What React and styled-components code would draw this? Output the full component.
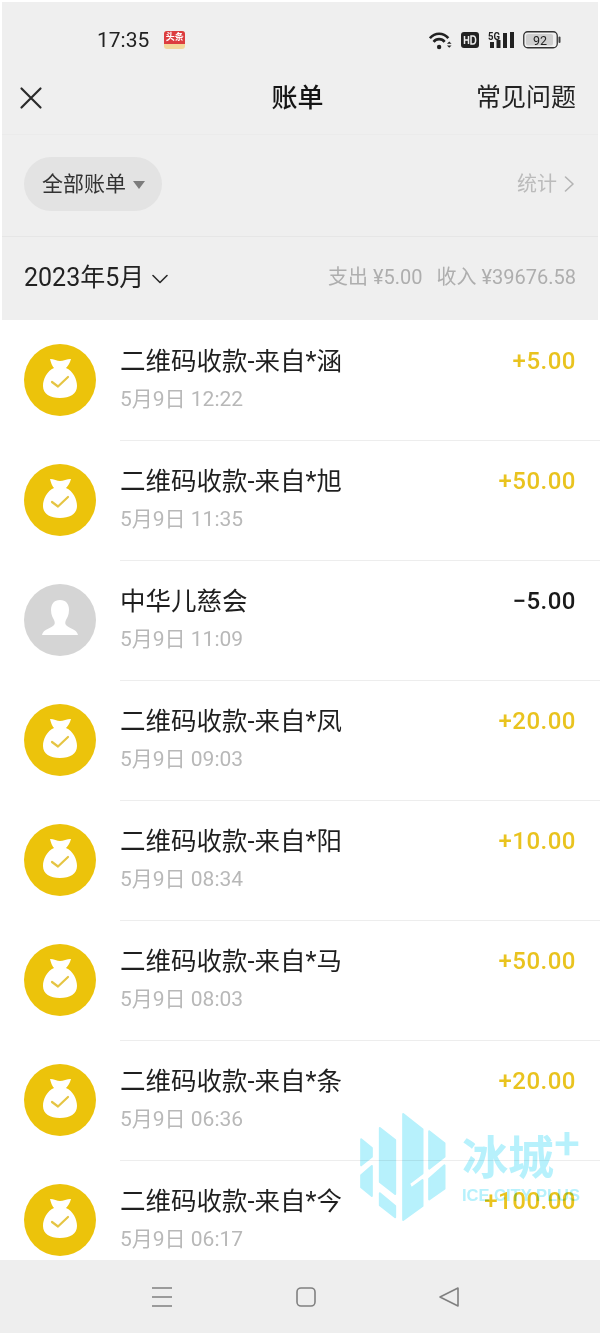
import styled, { createGlobalStyle } from 'styled-components';

const GlobalStyle = createGlobalStyle`
  html, body {
    margin: 0;
    padding: 0;
    background: #ffffff;
  }
  * {
    box-sizing: border-box;
  }
`;

const bills = [
  { id: 1, title: '二维码收款-来自*涵', time: '5月9日 12:22', amount: '+5.00' },
  { id: 2, title: '二维码收款-来自*旭', time: '5月9日 11:35', amount: '+50.00' },
  { id: 3, title: '中华儿慈会', time: '5月9日 11:09', amount: '−5.00', expense: true },
  { id: 4, title: '二维码收款-来自*凤', time: '5月9日 09:03', amount: '+20.00' },
  { id: 5, title: '二维码收款-来自*阳', time: '5月9日 08:34', amount: '+10.00' },
  { id: 6, title: '二维码收款-来自*马', time: '5月9日 08:03', amount: '+50.00' },
  { id: 7, title: '二维码收款-来自*条', time: '5月9日 06:36', amount: '+20.00' },
  { id: 8, title: '二维码收款-来自*今', time: '5月9日 06:17', amount: '+100.00' },
];

const Page = styled.div`
  position: relative;
  width: 600px;
  height: 1333px;
  display: flex;
  flex-direction: column;
  overflow: hidden;
  background: #ffffff;
  color: #1c1c1c;
  font-family: Roboto, "Noto Sans CJK SC", sans-serif;
`;

const Top = styled.header`
  flex: none;
  margin: 2px 2px 0 2px;
  background: #efefef;
`;

const StatusBar = styled.div`
  height: 66px;
  display: flex;
  align-items: center;
  padding: 10px 37px 0 95px;
`;

const Clock = styled.span`
  font-size: 21px;
  color: #222;
`;

const AppBadge = styled.div`
  width: 21px;
  height: 18px;
  margin-left: 15px;
  border-radius: 3px;
  overflow: hidden;
  display: flex;
  flex-direction: column;
  background: #f3d69a;
`;

const AppBadgeText = styled.span`
  height: 13px;
  background: #dc3c3f;
  color: #ffffff;
  font-size: 9px;
  font-weight: 700;
  line-height: 13px;
  text-align: center;
  white-space: nowrap;
`;

const StatusIcons = styled.div`
  margin-left: auto;
  display: flex;
  align-items: center;
  gap: 9px;
`;

const NavBar = styled.nav`
  height: 67px;
  padding: 0 22px 6px 17px;
  display: grid;
  grid-template-columns: 1fr auto 1fr;
  align-items: center;
  border-bottom: 1px solid #ebebeb;
`;

const NavTitle = styled.h1`
  margin: 0 0 6px;
  font-size: 26px;
  font-weight: 500;
  color: #151515;
`;

const NavLink = styled.span`
  justify-self: end;
  margin-bottom: 6px;
  font-size: 25px;
  color: #222;
`;

const FilterBar = styled.div`
  height: 102px;
  padding: 0 21px 3px 22px;
  display: flex;
  align-items: center;
  justify-content: space-between;
  border-bottom: 1px solid #e6e6e6;
`;

const FilterPill = styled.div`
  width: 138px;
  height: 54px;
  border-radius: 27px;
  background: #e3e3e3;
  display: flex;
  align-items: center;
  padding-left: 18px;
  gap: 7px;
  font-size: 21px;
  color: #333;
`;

const FilterLabel = styled.span`
  margin-bottom: 4px;
`;

const Caret = styled.span`
  width: 0;
  height: 0;
  margin-top: 2px;
  border-left: 6px solid transparent;
  border-right: 6px solid transparent;
  border-top: 8px solid #7c7c7c;
`;

const StatsLink = styled.div`
  display: flex;
  align-items: center;
  gap: 4px;
  font-size: 20px;
  color: #bbbbbb;
`;

const StatsLabel = styled.span`
  margin-bottom: 4px;
`;

const MonthBar = styled.div`
  height: 83px;
  padding: 0 22px;
  display: flex;
  align-items: center;
  justify-content: space-between;
`;

const MonthPicker = styled.div`
  display: flex;
  align-items: center;
  gap: 8px;
  font-size: 25px;
  color: #222;
`;

const MonthLabel = styled.span`
  margin-bottom: 8px;
`;

const Summary = styled.div`
  display: flex;
  gap: 14px;
  margin-bottom: 6px;
  font-size: 20px;
  color: #aeaeae;
`;

const List = styled.main`
  flex: 1;
  min-height: 0;
  overflow: hidden;
`;

const RowBody = styled.div`
  flex: 1;
  height: 120px;
  padding: 21px 24px 0 0;
  display: grid;
  grid-template-columns: 1fr auto;
  align-content: start;
  row-gap: 4px;
  border-top: 1px solid #ededed;
`;

const Row = styled.div`
  height: 120px;
  padding-left: 24px;
  display: flex;
  align-items: center;
  gap: 24px;

  &:first-child ${RowBody} {
    border-top-color: transparent;
  }
`;

const Avatar = styled.svg`
  flex: none;
  width: 72px;
  height: 72px;
`;

const RowTitle = styled.div`
  font-size: 25.5px;
  line-height: 38px;
  color: #1f1f1f;
  white-space: nowrap;
`;

const Amount = styled.div`
  font-size: 24px;
  line-height: 38px;
  font-weight: 500;
  letter-spacing: 0.5px;
  color: ${props => props.$expense ? '#1a1a1a' : '#e9c31f'};
`;

const RowTime = styled.div`
  grid-column: 1 / -1;
  font-size: 21px;
  line-height: 30px;
  color: #b8b8b8;
`;

const BottomBar = styled.footer`
  flex: none;
  height: 73px;
  padding: 0 141px 0 152px;
  display: flex;
  align-items: center;
  justify-content: space-between;
  background: #eeeeee;
`;

const Watermark = styled.div`
  position: absolute;
  left: 359px;
  top: 1112px;
  display: flex;
  gap: 16px;
  color: #b7f1fc;
  mix-blend-mode: multiply;
  pointer-events: none;
`;

const WatermarkText = styled.div`
  padding-top: 10px;
  display: flex;
  flex-direction: column;
  font-family: "Noto Sans CJK SC", sans-serif;
`;

const WatermarkName = styled.span`
  font-size: 46px;
  line-height: 64px;
  font-weight: 700;
  white-space: nowrap;
`;

const WatermarkPlus = styled.sup`
  font-size: 44px;
  line-height: 0;
  font-weight: 700;
  vertical-align: 14px;
`;

const WatermarkSub = styled.span`
  font-family: "Liberation Sans", sans-serif;
  font-size: 16.5px;
  line-height: 18px;
  font-weight: 700;
  white-space: nowrap;
`;

function WifiIcon() {
  return (
    <svg width="23" height="19" viewBox="0 0 25 20" fill="none" stroke="#222">
      <path d="M1 7.5 C6.5 1 15.5 1 21 7.5" strokeWidth="2.8" />
      <path d="M5 11.5 C8 7.5 14 7.5 17 11.5" strokeWidth="2.8" />
      <circle cx="11" cy="17" r="2.4" fill="#222" stroke="none" />
      <path d="M19.5 13.5 L22 11 L24.5 13.5 Z M19.5 15.5 L22 18 L24.5 15.5 Z" fill="#222" stroke="none" />
    </svg>
  );
}

function HdIcon() {
  return (
    <svg width="18" height="16" viewBox="0 0 18 16">
      <rect width="18" height="16" rx="3" fill="#222" />
      <path d="M3.5 4 V12 M3.5 8 H7.5 M7.5 4 V12" stroke="#efefef" strokeWidth="1.5" fill="none" />
      <path d="M10 4 H12 C15.5 4 15.5 12 12 12 H10 Z" stroke="#efefef" strokeWidth="1.5" fill="none" />
    </svg>
  );
}

function SignalIcon() {
  return (
    <svg width="26" height="18" viewBox="0 0 26 18">
      <text x="0" y="8.5" fontSize="11" fontWeight="700" fontFamily="Roboto, sans-serif" fill="#222" textLength="12" lengthAdjust="spacingAndGlyphs">5G</text>
      <rect x="2" y="11" width="4" height="6" fill="#222" />
      <rect x="8.5" y="9" width="4" height="8" fill="#222" />
      <rect x="15" y="2" width="4" height="15" fill="#222" />
      <rect x="22" y="1" width="4" height="16" fill="#222" />
    </svg>
  );
}

function BatteryIcon() {
  return (
    <svg width="38" height="18" viewBox="0 0 38 18">
      <rect x="0.75" y="0.75" width="33.5" height="16" rx="4" fill="none" stroke="#333" strokeWidth="1.3" />
      <rect x="3" y="3" width="27" height="11.5" rx="2" fill="#cfcfcf" />
      <rect x="35.5" y="5.5" width="2" height="6.5" rx="1" fill="#444" />
      <text x="17" y="13.5" textAnchor="middle" fontSize="12.5" fontFamily="Roboto, sans-serif" fill="#222">92</text>
    </svg>
  );
}

function CloseIcon() {
  return (
    <svg width="24" height="24" viewBox="0 0 24 24" fill="none" stroke="#2a2a2a" strokeWidth="2.2" strokeLinecap="round">
      <path d="M2.5 2.5 L21.5 21.5 M21.5 2.5 L2.5 21.5" />
    </svg>
  );
}

function Chevron({ color, size, down }) {
  return (
    <svg width={size} height={size} viewBox="0 0 16 16" fill="none" stroke={color} strokeWidth="1.6" strokeLinecap="round" strokeLinejoin="round">
      <path d={down ? 'M1 4.5 L8 11.5 L15 4.5' : 'M4.5 1 L12 8 L4.5 15'} />
    </svg>
  );
}

function BagAvatar() {
  return (
    <Avatar viewBox="0 0 72 72">
      <circle cx="36" cy="36" r="36" fill="#ecc30b" />
      <path
        d="M26 15 C30 15 33 17 36 17 C39 17 43 15 47 15 C46 19 44 22 42 24 C49 27 53 35 53 42 C53 50 46 54 36 54 C26 54 19 50 19 42 C19 35 23 27 30 24 C28 22 27 19 26 15 Z"
        fill="#ffffff"
      />
      <path d="M28 38 L34 42.5 L44 33" fill="none" stroke="#e5c544" strokeWidth="2.2" strokeLinecap="round" strokeLinejoin="round" />
    </Avatar>
  );
}

function PersonAvatar() {
  return (
    <Avatar viewBox="0 0 72 72">
      <circle cx="36" cy="36" r="36" fill="#d5d5d5" />
      <path
        d="M36 16 c-6 0-9 4-9 10 c0 5 2 8 3 10 c1 2 1 4 0 5 c-2 3-11 4-12 10 h36 c-1-6-10-7-12-10 c-1-1-1-3 0-5 c1-2 3-5 3-10 c0-6-3-10-9-10 z"
        fill="#ffffff"
      />
    </Avatar>
  );
}

function WatermarkLogo() {
  return (
    <svg width="87" height="122" viewBox="0 0 260 366" fill="#b7f1fc" stroke="#b7f1fc" strokeWidth="6" strokeLinejoin="round">
      <polygon points="6,82 38,108 38,134 6,160" />
      <polygon points="6,190 38,162 38,252 6,226" />
      <polygon points="62,48 108,84 108,246 62,210" />
      <polygon points="62,244 108,282 108,316 62,280" />
      <polygon points="132,6 190,52 190,184 150,214 156,229 190,204 190,282 132,324" />
      <polygon points="210,58 256,94 256,134 210,170" />
      <polygon points="210,200 256,160 256,230 210,262" />
    </svg>
  );
}

export default function App() {
  return (
    <Page>
      <GlobalStyle />
      <Top>
        <StatusBar>
          <Clock>17:35</Clock>
          <AppBadge>
            <AppBadgeText>头条</AppBadgeText>
          </AppBadge>
          <StatusIcons>
            <WifiIcon />
            <HdIcon />
            <SignalIcon />
            <BatteryIcon />
          </StatusIcons>
        </StatusBar>
        <NavBar>
          <CloseIcon />
          <NavTitle>账单</NavTitle>
          <NavLink>常见问题</NavLink>
        </NavBar>
        <FilterBar>
          <FilterPill>
            <FilterLabel>全部账单</FilterLabel>
            <Caret />
          </FilterPill>
          <StatsLink>
            <StatsLabel>统计</StatsLabel>
            <Chevron color="#b4b4b4" size={16} />
          </StatsLink>
        </FilterBar>
        <MonthBar>
          <MonthPicker>
            <MonthLabel>2023年5月</MonthLabel>
            <Chevron color="#2a2a2a" size={16} down />
          </MonthPicker>
          <Summary>
            <span>支出 ¥5.00</span>
            <span>收入 ¥39676.58</span>
          </Summary>
        </MonthBar>
      </Top>
      <List>
        {bills.map(bill => (
          <Row key={bill.id}>
            {bill.expense ? <PersonAvatar /> : <BagAvatar />}
            <RowBody>
              <RowTitle>{bill.title}</RowTitle>
              <Amount $expense={bill.expense}>{bill.amount}</Amount>
              <RowTime>{bill.time}</RowTime>
            </RowBody>
          </Row>
        ))}
      </List>
      <BottomBar>
        <svg width="20" height="22" viewBox="0 0 20 22" stroke="#808080" strokeWidth="1.6">
          <path d="M0 2 H20 M0 11 H20 M0 20 H20" />
        </svg>
        <svg width="20" height="20" viewBox="0 0 20 20" fill="none" stroke="#808080" strokeWidth="1.6">
          <rect x="1" y="1" width="18" height="18" rx="4" />
        </svg>
        <svg width="20" height="20" viewBox="0 0 20 20" fill="none" stroke="#808080" strokeWidth="1.6" strokeLinejoin="round">
          <path d="M1 10 L19 1 V19 Z" />
        </svg>
      </BottomBar>
      <Watermark>
        <WatermarkLogo />
        <WatermarkText>
          <WatermarkName>冰城<WatermarkPlus>+</WatermarkPlus></WatermarkName>
          <WatermarkSub>ICE CITY PLUS</WatermarkSub>
        </WatermarkText>
      </Watermark>
    </Page>
  );
}
